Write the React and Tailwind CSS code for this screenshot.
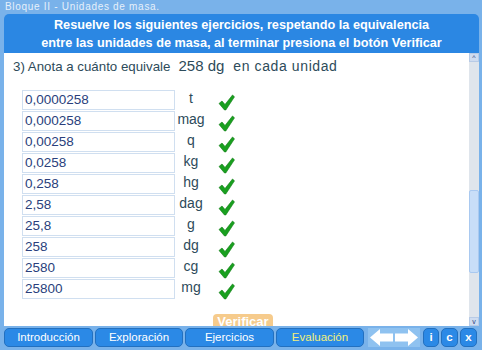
import React from "react";

const rows = [
  ["0,0000258", "t"],
  ["0,000258", "mag"],
  ["0,00258", "q"],
  ["0,0258", "kg"],
  ["0,258", "hg"],
  ["2,58", "dag"],
  ["25,8", "g"],
  ["258", "dg"],
  ["2580", "cg"],
  ["25800", "mg"],
];

function Check() {
  return (
    <svg width="17" height="17" viewBox="0 0 17 17">
      <path d="M1 9.5 L4 7 L7 10.5 L14.5 1 L16.5 2.8 L7.8 16 L6.5 16 Z" fill="#19a01f" stroke="#0f7a14" strokeWidth="0.6" />
    </svg>
  );
}

function NavBtn({ label, className = "" }) {
  return (
    <div className={`h-[19px] flex items-center justify-center rounded-[5px] bg-[#2b89e6] border border-[#2270c0] text-[11.5px] text-white ${className}`}>
      {label}
    </div>
  );
}

export default function App() {
  return (
    <div className="w-[482px] h-[350px] bg-[#79b2ea] flex flex-col overflow-hidden" style={{ fontFamily: '"Liberation Sans", Arial, sans-serif' }}>
      {/* top strip */}
      <div className="h-[14px] pl-[5px] text-[10px] tracking-[0.7px] leading-[14px] text-[#e6f0fa]">Bloque II - Unidades de masa.</div>

      {/* header */}
      <div className="mx-[4px] mr-[3px] h-[39px] pt-[1px] rounded-t-[5px] bg-[#2b87e3] flex flex-col items-center justify-center text-white font-bold text-[12.7px] leading-[18px]">
        <div>Resuelve los siguientes ejercicios, respetando la equivalencia</div>
        <div>entre las unidades de masa, al terminar presiona el botón Verificar</div>
      </div>

      {/* content */}
      <div className="mx-[4px] mr-[3px] h-[273px] bg-white flex overflow-hidden">
        <div className="flex-1 flex flex-col">
          <div className="pl-[9px] pt-[2px] h-[23px] flex items-baseline text-[13.3px] text-[#2d4b5a]">
            <span>3) Anota a cuánto equivale</span>
            <span className="ml-[8px] text-[15px]">258 dg</span>
            <span className="ml-[9px] text-[14px] tracking-[0.6px]">en cada unidad</span>
          </div>
          <div className="mt-[14px] pl-[18px] flex flex-col gap-[1px]">
            {rows.map(([v, u]) => (
              <div key={u} className="flex items-center h-[20px]">
                <div className="w-[153px] h-[20px] border border-[#d0dff0] text-[13.5px] leading-[18px] text-[#2a3f7c] pl-[2px]">{v}</div>
                <div className="w-[32px] text-center text-[14px] text-[#2d4b5a] pb-[3px]">{u}</div>
                <div className="ml-[11px] mt-[4px]"><Check /></div>
              </div>
            ))}
          </div>
          <div className="mt-[15px] ml-[209px] w-[60px] h-[16px] rounded-t-[4px] bg-[#f6cb8c] text-white font-bold text-[13px] leading-[16px] text-center">Verificar</div>
        </div>
        {/* scrollbar */}
        <div className="w-[10px] bg-[#dfe5ec] flex flex-col">
          <div className="h-[9px] bg-[#cfdcf0] border border-[#b8cbe6] flex items-center justify-center text-[7px] leading-none text-[#2a3f7c]">^</div>
          <div className="h-[128px]" />
          <div className="h-[83px] rounded-[2px] bg-[#c8def8] border border-[#a9c9f0]" />
          <div className="flex-1" />
          <div className="h-[9px] bg-[#cfdcf0] border border-[#b8cbe6] flex items-center justify-center text-[7px] leading-none text-[#2a3f7c]">v</div>
        </div>
      </div>

      {/* nav */}
      <div className="h-[24px] pl-[4px] pt-[2px] flex items-start">
        <NavBtn label="Introducción" className="w-[89px]" />
        <NavBtn label="Exploración" className="w-[88px] ml-[2px]" />
        <NavBtn label="Ejercicios" className="w-[89px] ml-[2px]" />
        <NavBtn label="Evaluación" className="w-[88px] ml-[2px] !text-[#f3f07a]" />
        <div className="ml-[4px] w-[52px] h-[19px] bg-[#8fc2f0] flex items-center">
          <svg width="52" height="19" viewBox="0 0 52 19">
            <path d="M2 9.5 L12 1 L12 5.5 L25 5.5 L25 13.5 L12 13.5 L12 18 Z" fill="#ffffff" />
            <path d="M50 9.5 L40 1 L40 5.5 L27 5.5 L27 13.5 L40 13.5 L40 18 Z" fill="#ffffff" />
          </svg>
        </div>
        <NavBtn label="i" className="w-[16px] ml-[3px] font-bold" />
        <NavBtn label="c" className="w-[17px] ml-[2px] font-bold" />
        <NavBtn label="x" className="w-[17px] ml-[2px] font-bold" />
      </div>
    </div>
  );
}
